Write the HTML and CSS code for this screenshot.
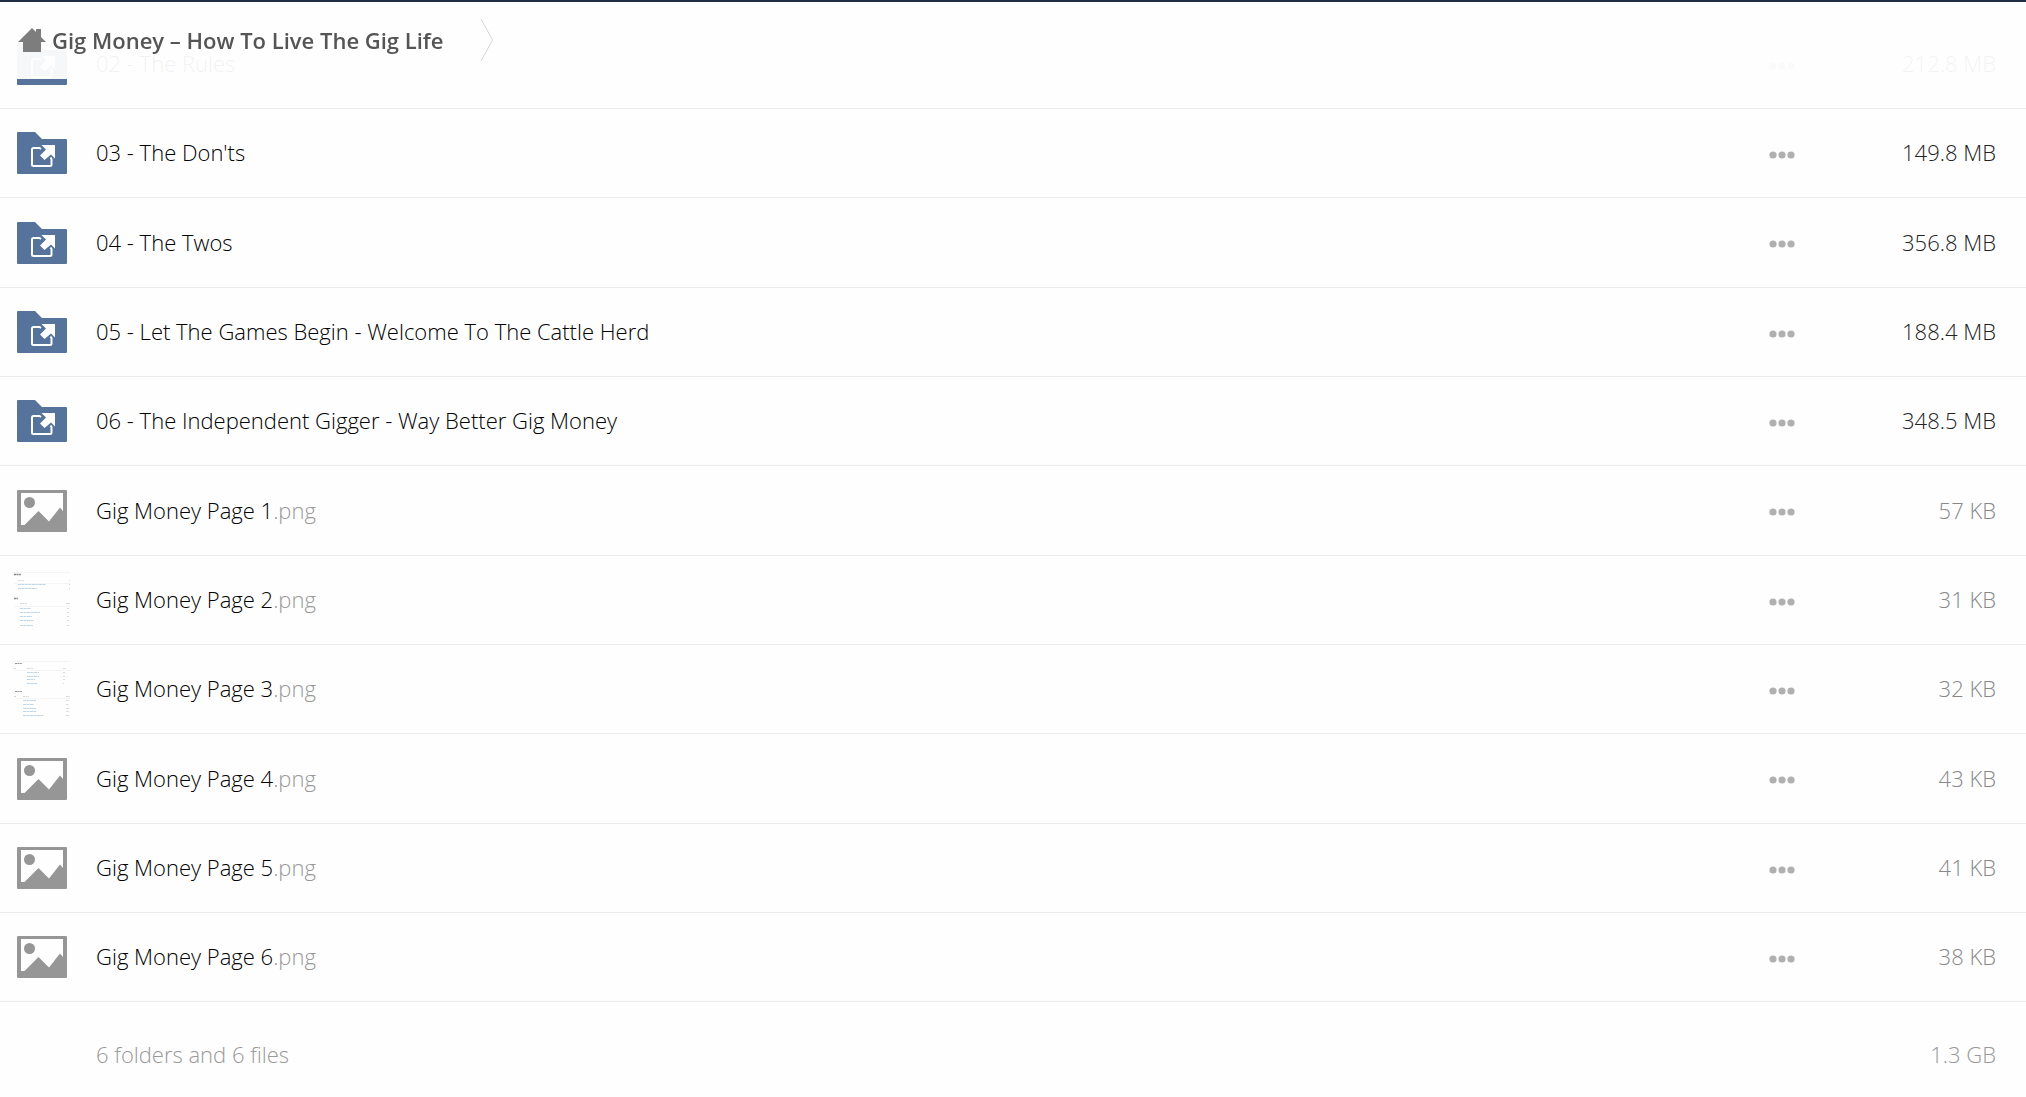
FILE: index.html
```html
<!DOCTYPE html>
<html lang="en">
<head>
<meta charset="utf-8">
<meta name="viewport" content="width=device-width, initial-scale=1">
<title>Gig Money – How To Live The Gig Life</title>
<link rel="stylesheet" href="styles.css">
</head>
<body>
<svg class="sprite" aria-hidden="true">
  <symbol id="folder" viewBox="0 0 50 42">
    <path fill="#55739b" d="M1 0h17l7 7h24a1 1 0 0 1 1 1v33a1 1 0 0 1-1 1H1a1 1 0 0 1-1-1V1a1 1 0 0 1 1-1z"/>
    <path fill="none" stroke="#fff" stroke-width="2" d="M24 17l-1.500-1H16.500a1.500 1.500 0 0 0-1.500 1.500V32.500a1.500 1.500 0 0 0 1.500 1.500H33a1.500 1.500 0 0 0 1.500-1.500V27l-1-1.500"/>
    <path fill="#fff" d="M24.500 13H38v13.500l-4-4-6.500 5.500-4.500-4.500 6-6z"/>
  </symbol>
  <symbol id="image" viewBox="0 0 50 42">
    <path fill="#969696" fill-rule="evenodd" d="M1 0h48a1 1 0 0 1 1 1v40a1 1 0 0 1-1 1H1a1 1 0 0 1-1-1V1a1 1 0 0 1 1-1zM4 3v32h3.500L21.500 21 32 31.500 43 17.500l3 3.500V3z"/>
    <circle cx="12.500" cy="12.500" r="5.500" fill="#969696"/>
  </symbol>
  <symbol id="dots" viewBox="0 0 26 8">
    <g fill="#b0b0b0"><circle cx="4" cy="4" r="3.600"/><circle cx="13" cy="4" r="3.600"/><circle cx="22" cy="4" r="3.600"/></g>
  </symbol>
</svg>

<header class="topbar">
  <nav class="crumbs" aria-label="Breadcrumb">
    <a class="crumb" href="#">
      <svg class="home" viewBox="0 0 28 24" aria-hidden="true"><path fill="#7d7d7d" d="M0 14L14 0l4 4V1h5v8l5 5h-5v10H5V14z"/></svg>
      <span>Gig Money – How To Live The Gig Life</span>
    </a>
    <svg class="chevron" viewBox="0 0 14 42" aria-hidden="true"><path fill="none" stroke="#d4d4d4" d="M1 0l11.500 21L1 42"/></svg>
  </nav>
</header>

<main class="listing">
  <table class="files">
    <tbody>
      <tr><td class="icon"><svg class="glyph"><use href="#folder"/></svg></td><td class="name"><a href="#">02 - The Rules</a></td><td class="menu"><button type="button" aria-label="Actions"><svg class="dots"><use href="#dots"/></svg></button></td><td class="size">212.8 MB</td></tr>
      <tr><td class="icon"><svg class="glyph"><use href="#folder"/></svg></td><td class="name"><a href="#">03 - The Don'ts</a></td><td class="menu"><button type="button" aria-label="Actions"><svg class="dots"><use href="#dots"/></svg></button></td><td class="size">149.8 MB</td></tr>
      <tr><td class="icon"><svg class="glyph"><use href="#folder"/></svg></td><td class="name"><a href="#">04 - The Twos</a></td><td class="menu"><button type="button" aria-label="Actions"><svg class="dots"><use href="#dots"/></svg></button></td><td class="size">356.8 MB</td></tr>
      <tr><td class="icon"><svg class="glyph"><use href="#folder"/></svg></td><td class="name"><a href="#">05 - Let The Games Begin - Welcome To The Cattle Herd</a></td><td class="menu"><button type="button" aria-label="Actions"><svg class="dots"><use href="#dots"/></svg></button></td><td class="size">188.4 MB</td></tr>
      <tr><td class="icon"><svg class="glyph"><use href="#folder"/></svg></td><td class="name"><a href="#">06 - The Independent Gigger - Way Better Gig Money</a></td><td class="menu"><button type="button" aria-label="Actions"><svg class="dots"><use href="#dots"/></svg></button></td><td class="size">348.5 MB</td></tr>
      <tr class="file"><td class="icon"><svg class="glyph"><use href="#image"/></svg></td><td class="name"><a href="#">Gig Money Page 1<span class="ext">.png</span></a></td><td class="menu"><button type="button" aria-label="Actions"><svg class="dots"><use href="#dots"/></svg></button></td><td class="size">57 KB</td></tr>
      <tr class="file"><td class="icon thumb-cell"><svg class="thumb" viewBox="0 0 56 56">
        <path stroke="#f5f5f5" d="M0 .5h56M0 11.500h56M0 34.500h56"/>
        <path stroke="#888" stroke-width="1.500" stroke-dasharray="2 .4" d="M0 2.500h7M0 26.500h4"/>
        <path stroke="#d8d8d8" stroke-dasharray="2 .5" d="M4 8.500h6M6 31.500h7M52 31.500h4M55 8.500h1M55 12.500h1M55 16.500h1M53 36.500h2M53 40.500h2M53 44.500h2M53 48.500h2M53 53.500h2"/>
        <path stroke="#bfd6e8" stroke-dasharray="3 .5" d="M4 12.500h28M4 16.500h19M6 36.500h11M6 40.500h20M6 44.500h12M6 48.500h14M6 53.500h13"/>
      </svg></td><td class="name"><a href="#">Gig Money Page 2<span class="ext">.png</span></a></td><td class="menu"><button type="button" aria-label="Actions"><svg class="dots"><use href="#dots"/></svg></button></td><td class="size">31 KB</td></tr>
      <tr class="file"><td class="icon thumb-cell"><svg class="thumb" viewBox="0 0 56 56">
        <path stroke="#f5f5f5" d="M0 .5h56M0 9.500h56M0 37.500h56"/>
        <path stroke="#999" stroke-dasharray="2 .4" d="M1 2.500h7M1 30.500h7"/>
        <path stroke="#d8d8d8" stroke-dasharray="2 .5" d="M0 7.500h2M13 7.500h6M49 7.500h3M0 35.500h2M9 35.500h6M52 35.500h4M49 11.500h2M49 15.500h2M49 18.500h2M49 22.500h1M52 39.500h3M52 43.500h3M52 47.500h3M52 50.500h3M52 54.500h3"/>
        <path stroke="#bfd6e8" stroke-dasharray="3 .5" d="M13 11.500h12M13 15.500h12M13 18.500h8M13 22.500h11M9 39.500h13M9 43.500h11M9 47.500h13M9 50.500h13M9 54.500h21"/>
      </svg></td><td class="name"><a href="#">Gig Money Page 3<span class="ext">.png</span></a></td><td class="menu"><button type="button" aria-label="Actions"><svg class="dots"><use href="#dots"/></svg></button></td><td class="size">32 KB</td></tr>
      <tr class="file"><td class="icon"><svg class="glyph"><use href="#image"/></svg></td><td class="name"><a href="#">Gig Money Page 4<span class="ext">.png</span></a></td><td class="menu"><button type="button" aria-label="Actions"><svg class="dots"><use href="#dots"/></svg></button></td><td class="size">43 KB</td></tr>
      <tr class="file"><td class="icon"><svg class="glyph"><use href="#image"/></svg></td><td class="name"><a href="#">Gig Money Page 5<span class="ext">.png</span></a></td><td class="menu"><button type="button" aria-label="Actions"><svg class="dots"><use href="#dots"/></svg></button></td><td class="size">41 KB</td></tr>
      <tr class="file"><td class="icon"><svg class="glyph"><use href="#image"/></svg></td><td class="name"><a href="#">Gig Money Page 6<span class="ext">.png</span></a></td><td class="menu"><button type="button" aria-label="Actions"><svg class="dots"><use href="#dots"/></svg></button></td><td class="size">38 KB</td></tr>
    </tbody>
    <tfoot>
      <tr><td></td><td class="name">6 folders and 6 files</td><td></td><td class="size">1.3 GB</td></tr>
    </tfoot>
  </table>
</main>
</body>
</html>
```
FILE: styles.css
```css
* { box-sizing: border-box; }

body {
  margin: 0;
  background: #fefefe;
  color: #000;
  font: 300 22px/30px "Open Sans", "Noto Sans", sans-serif;
}

a { color: inherit; text-decoration: none; }
svg { display: block; }
.sprite { position: absolute; width: 0; height: 0; }

/* Fixed bar that the list scrolls beneath */
.topbar {
  position: fixed;
  top: 0;
  left: 0;
  right: 0;
  z-index: 1;
  height: 79px;
  border-top: 2px solid #1f2d47;
  background: rgba(254, 254, 254, .95);
}

.crumbs {
  display: flex;
  align-items: center;
  gap: 36px;
  height: 76px;
  padding: 0 18px;
}

.crumb {
  display: flex;
  align-items: center;
  gap: 6px;
  color: #555;
  font-weight: 600;
}

.home { width: 28px; height: 24px; }
.chevron { width: 14px; height: 42px; }

.listing { padding-top: 20px; }

.files {
  width: 100%;
  border-collapse: separate;
  border-spacing: 0;
  table-layout: fixed;
}

.files td { padding: 0; vertical-align: middle; }
.files tbody td { height: 89px; border-bottom: 1px solid #ebebeb; }
.files tbody tr:nth-child(3n) td { height: 90px; }

.files td:first-child { width: 96px; }
.files .icon { padding-left: 17px; }
.files .thumb-cell { padding-left: 14px; }
.files td:nth-child(3) { width: 60px; }
.files td:last-child { width: 214px; }
.files .name { padding-bottom: 2px; }
.files .size { padding: 0 30px 2px 0; text-align: right; color: #222; }
.files .file .size { color: #888; }

.glyph { width: 50px; height: 42px; }
.thumb { width: 56px; height: 56px; }
.dots { width: 26px; height: 8px; }
.ext { color: #999; }

.menu button {
  display: block;
  padding: 11px 17px 8px;
  border: 0;
  background: none;
  cursor: pointer;
}

.files tfoot td { height: 95px; padding-top: 10px; color: #999; }
.files tfoot .size { padding-top: 10px; color: #999; }
```
